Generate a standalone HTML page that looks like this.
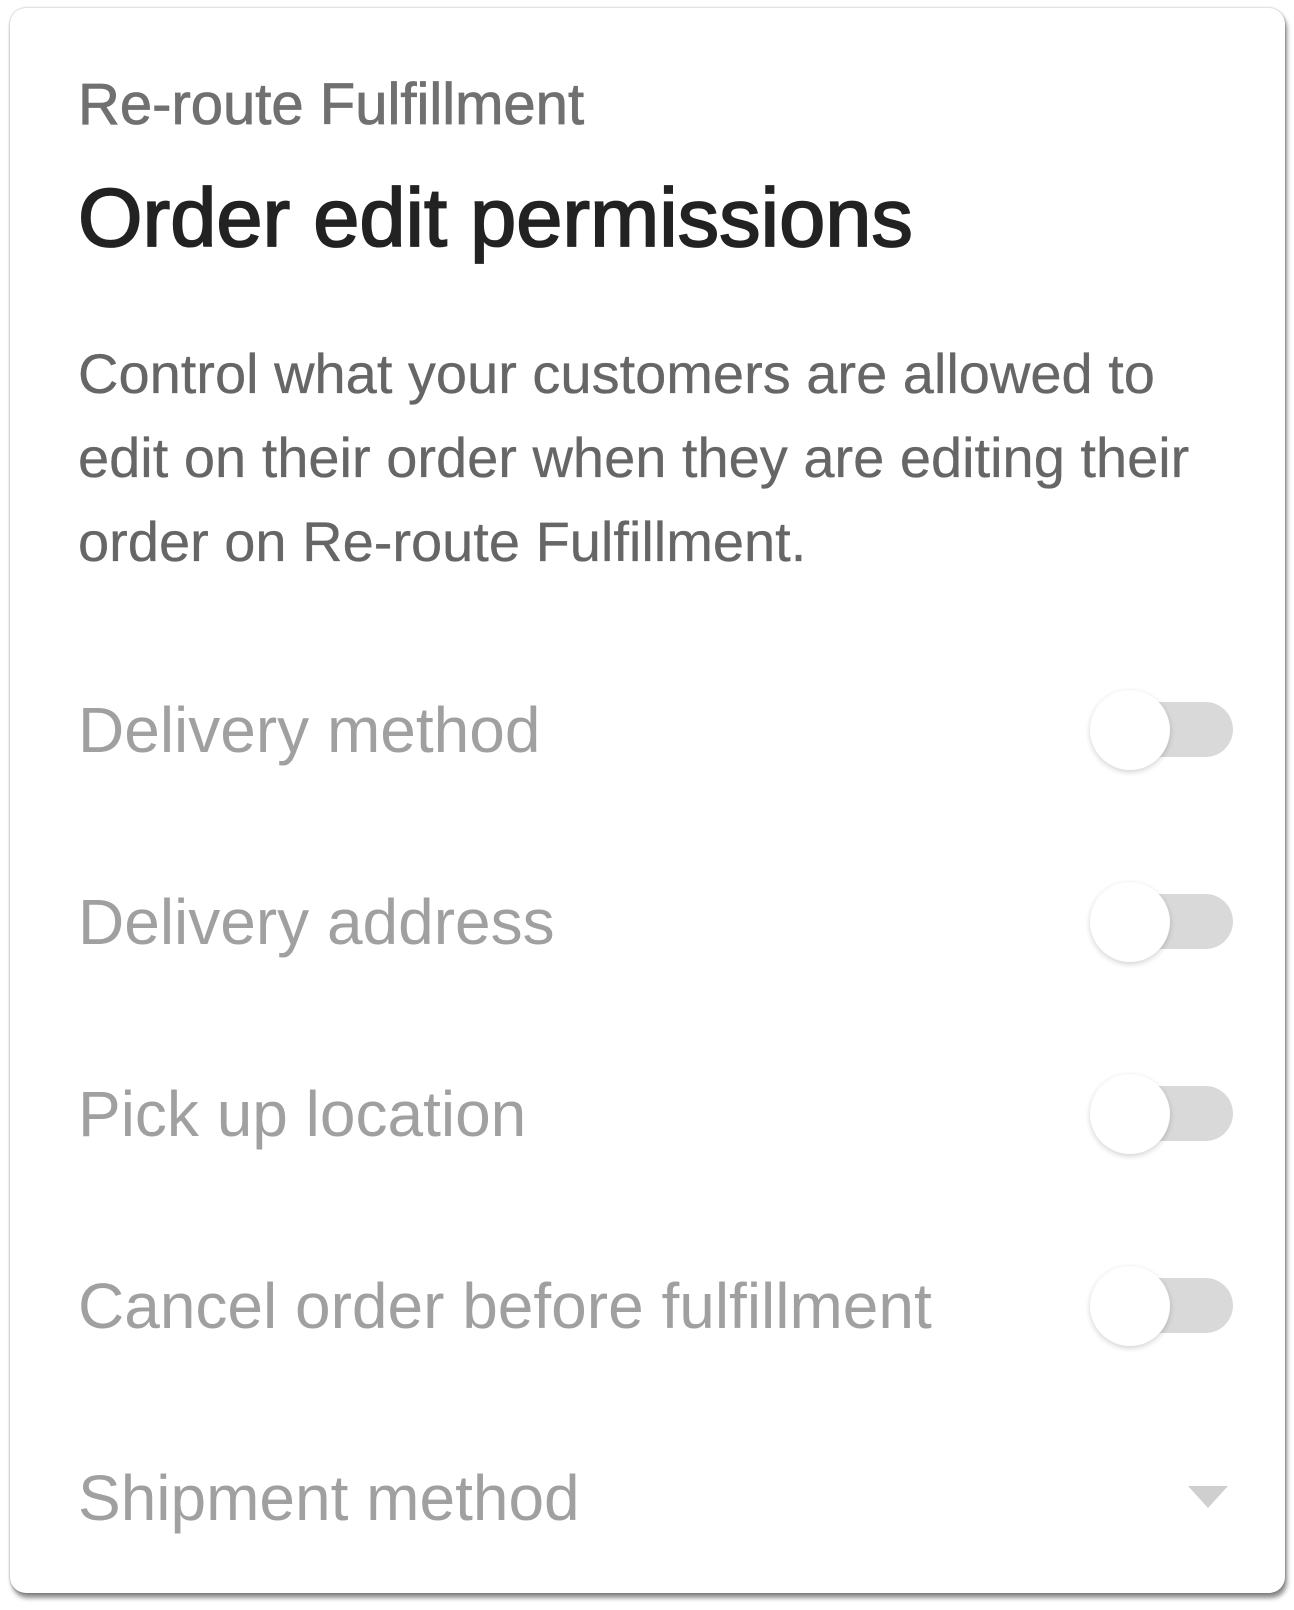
<!DOCTYPE html>
<html><head><meta charset="utf-8"><style>
html,body{margin:0;padding:0;background:#fff;width:1294px;height:1610px;overflow:hidden;font-family:"Liberation Sans",Arial,sans-serif}
.card{position:absolute;left:10px;top:8px;width:1275px;height:1585px;background:#fff;border-radius:16px;box-shadow:0 0 2px rgba(0,0,0,.35),2px 5px 5px rgba(0,0,0,.45)}
.t{position:absolute;left:78px;white-space:nowrap}
.sub{font-size:58px;color:#707070;top:71px;-webkit-text-stroke:.8px #707070}
.h{font-size:83px;color:#222;top:170px;-webkit-text-stroke:1.8px #222}
.p{font-size:56px;color:#666;line-height:84px;top:332px;-webkit-text-stroke:.3px #666}
.lbl{font-size:64px;color:#a0a0a0}
.tr{position:absolute;left:1100px;width:133px;height:55px;border-radius:28px;background:#d9d9d9}
.kn{position:absolute;left:1090px;width:80px;height:80px;border-radius:50%;background:#fff;box-shadow:0 2px 6px rgba(0,0,0,.18)}
.tri{position:absolute;left:1188px;top:1486px;width:0;height:0;border-left:20px solid transparent;border-right:20px solid transparent;border-top:22px solid #cfcfcf}
</style></head><body>
<div class="card"></div>
<div class="t sub">Re-route Fulfillment</div>
<div class="t h">Order edit permissions</div>
<div class="t p">Control what your customers are allowed to<br>edit on their order when they are editing their<br>order on Re-route Fulfillment.</div>
<div class="t lbl" style="top:693px">Delivery method</div>
<div class="t lbl" style="top:885px">Delivery address</div>
<div class="t lbl" style="top:1077px">Pick up location</div>
<div class="t lbl" style="top:1269px">Cancel order before fulfillment</div>
<div class="t lbl" style="top:1461px">Shipment method</div>
<div class="tr" style="top:702px"></div><div class="kn" style="top:690px"></div>
<div class="tr" style="top:894px"></div><div class="kn" style="top:882px"></div>
<div class="tr" style="top:1086px"></div><div class="kn" style="top:1074px"></div>
<div class="tr" style="top:1278px"></div><div class="kn" style="top:1266px"></div>
<div class="tri"></div>
</body></html>
